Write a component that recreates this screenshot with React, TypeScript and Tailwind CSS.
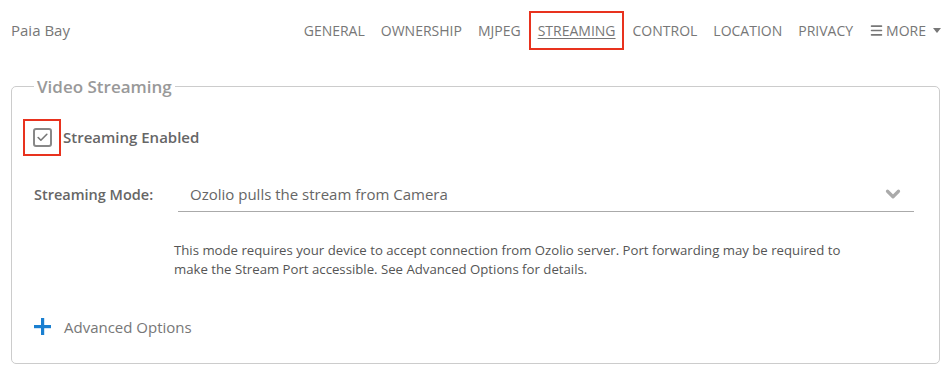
import React from 'react';
import { Check, ChevronDown, Menu } from 'lucide-react';

const NAV = ['GENERAL', 'OWNERSHIP', 'MJPEG', 'STREAMING', 'CONTROL', 'LOCATION', 'PRIVACY'];

export default function App() {
  return (
    <div className="w-[951px] h-[375px] bg-white text-[#777] font-['Open_Sans',sans-serif] overflow-hidden">
      <header className="flex items-center justify-between h-[60px] pl-[11px] pr-[10px]">
        <div className="text-[15px] text-[#777]">Paia Bay</div>
        <nav className="flex items-center text-[14px]">
          {NAV.map((item) =>
            item === 'STREAMING' ? (
              <div key={item} className="ml-0 mr-[1px] h-[39px] pl-[7px] pr-[6px] flex items-center border-2 border-[#e8321e]">
                <span className="underline underline-offset-2">{item}</span>
              </div>
            ) : (
              <span key={item} className="px-[8px]">{item}</span>
            )
          )}
          <span className="flex items-center pl-[8px]">
            <Menu className="w-[15px] h-[15px] mr-[2px]" strokeWidth={2.5} />
            MORE
            <span className="ml-[7px] w-0 h-0 border-l-[4px] border-r-[4px] border-t-[5px] border-l-transparent border-r-transparent border-t-[#777]" />
          </span>
        </nav>
      </header>

      <fieldset className="mx-[11px] mt-[14px] h-[290px] border border-[#ccc] rounded-[5px] px-[22px] w-[929px]">
        <legend className="px-[3px] text-[17px] font-semibold text-[#999]">Video Streaming</legend>

        <div className="flex items-center mt-[19px] -ml-[11px]">
          <div className="w-[38px] h-[37px] border-2 border-[#e8321e] flex items-center justify-center">
            <div className="w-[19px] h-[19px] border-2 border-[#888] rounded-[3px] flex items-center justify-center">
              <Check className="w-[13px] h-[13px] text-[#777]" strokeWidth={3} />
            </div>
          </div>
          <span className="ml-[2px] text-[15px] font-semibold text-[#666]">Streaming Enabled</span>
        </div>

        <div className="flex items-center mt-[22px]">
          <span className="w-[144px] shrink-0 text-[14.5px] font-semibold text-[#666]">Streaming Mode:</span>
          <div className="flex-1 flex items-center justify-between border-b border-[#aaa] h-[34px] pl-[12px] pr-[10px] mr-[3px]">
            <span className="text-[15px] text-[#666]">Ozolio pulls the stream from Camera</span>
            <ChevronDown className="w-[22px] h-[22px] text-[#aaa]" strokeWidth={3.5} />
          </div>
        </div>

        <p className="mt-[29px] ml-[140px] text-[13.2px] leading-[19px] text-[#555] w-[675px]">
          This mode requires your device to accept connection from Ozolio server. Port forwarding may be required to make the Stream Port accessible. See Advanced Options for details.
        </p>

        <div className="flex items-center mt-[37px]">
          <svg width="17" height="17" viewBox="0 0 17 17" className="shrink-0">
            <rect x="7" y="0" width="3.2" height="17" fill="#1a7fd0" />
            <rect x="0" y="7" width="17" height="3.2" fill="#1a7fd0" />
          </svg>
          <span className="ml-[13px] text-[15px] text-[#777]">Advanced Options</span>
        </div>
      </fieldset>
    </div>
  );
}
